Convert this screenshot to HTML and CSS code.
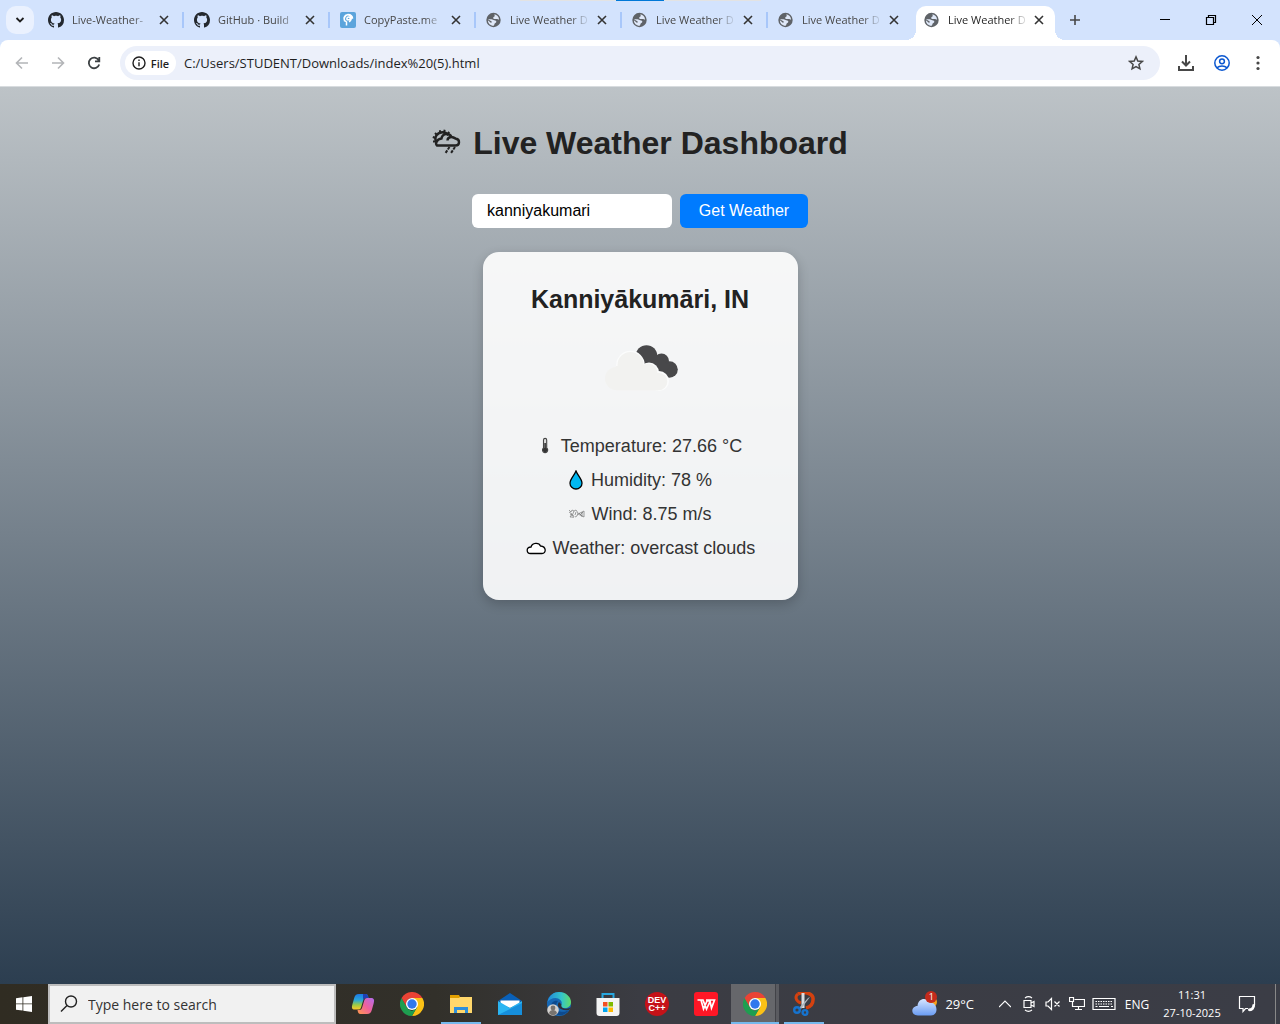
FILE: index.html
```html
<!DOCTYPE html>
<html lang="en">
<head>
<meta charset="utf-8">
<meta name="viewport" content="width=device-width, initial-scale=1">
<title>Live Weather Dashboard</title>
<link rel="stylesheet" href="styles.css">
</head>
<body>
<svg class="defs" aria-hidden="true">
  <symbol id="close" viewBox="0 0 12 12"><path d="M2 2l8 8M10 2l-8 8" stroke="currentColor" stroke-width="1.600"/></symbol>
  <symbol id="github" viewBox="0 0 16 16"><path fill="#24292f" d="M8 0C3.58 0 0 3.58 0 8c0 3.54 2.29 6.53 5.47 7.59.4.07.55-.17.55-.38 0-.19-.01-.82-.01-1.49-2.01.37-2.53-.49-2.69-.94-.09-.23-.48-.94-.82-1.13-.28-.15-.68-.52-.01-.53.63-.01 1.08.58 1.23.82.72 1.21 1.87.87 2.33.66.07-.52.28-.87.51-1.07-1.78-.2-3.64-.89-3.64-3.95 0-.87.31-1.59.82-2.15-.08-.2-.36-1.02.08-2.12 0 0 .67-.21 2.2.82.64-.18 1.32-.27 2-.27s1.36.09 2 .27c1.53-1.04 2.2-.82 2.2-.82.44 1.1.16 1.92.08 2.12.51.56.82 1.27.82 2.15 0 3.07-1.87 3.75-3.65 3.95.29.25.54.73.54 1.48 0 1.07-.01 1.93-.01 2.2 0 .21.15.46.55.38A8.01 8.01 0 0 0 16 8c0-4.42-3.58-8-8-8z"/></symbol>
  <symbol id="globe" viewBox="0 0 16 16"><circle cx="7.500" cy="8" r="7.200" fill="#5f6368"/><path fill="#dfe8f8" d="M8.500 2.200c2.500.5 4.300 2.600 4.600 5.200-1 .3-1.400-.5-2.300-.5H8.300c-1 0-1.300-.7-1-1.400C7.600 4.800 8.500 4.700 8.700 4c.200-.6-.4-1.100-.2-1.800zM1.900 7.300h3.600c1.200 0 1.700.9 2.700.9 1.300 0 2.300.7 2.100 1.900-.2 1-1.500 1-1.800 1.800-.3.700-.300 1.500-1 1.900C4.300 13.800 1.800 11.300 1.900 8.300l2.600 2.200c.5.400 1 .2 1.200-.2.300-.6-.2-1.200-.8-1.400z"/></symbol>
  <symbol id="chrome" viewBox="0 0 24 24"><path d="M12 6h10.400A12 12 0 0 1 12 24L17.200 15z" fill="#fbc116"/><path d="M1.600 6L6.800 15l1 2 4.200 2 5.200-4L12 24A12 12 0 0 1 1.600 6z" fill="#1e9e50"/><path d="M1.600 6A12 12 0 0 1 22.400 6H12a6 6 0 0 0-5.500 3.500L6.800 15z" fill="#ea4335"/><circle cx="12" cy="12" r="6" fill="#fff"/><circle cx="12" cy="12" r="4.700" fill="#3178ed"/></symbol>
</svg>

<header class="browser">
  <nav class="tabstrip" aria-label="Tabs">
    <button class="tab-search" aria-label="Search tabs"><svg width="12" height="12" viewBox="0 0 12 12" fill="none" stroke="#1f1f1f" stroke-width="1.800"><path d="M2.500 4L6 7.500 9.500 4"/></svg></button>
    <div class="tab"><svg class="fav"><use href="#github"/></svg><a class="tab-title" href="#">Live-Weather-</a><button class="tab-close" aria-label="Close tab"><svg><use href="#close"/></svg></button></div>
    <div class="tab"><svg class="fav"><use href="#github"/></svg><a class="tab-title" href="#">GitHub · Build</a><button class="tab-close" aria-label="Close tab"><svg><use href="#close"/></svg></button></div>
    <div class="tab"><svg class="fav" viewBox="0 0 16 16"><rect width="16" height="16" rx="2" fill="#5ba4dc"/><path d="M6.500 13.500V9.500M6.500 9.800a3.600 3.600 0 1 1 2.500-.1M4.600 9.300A5 5 0 0 1 8 2.500c3 0 4.700 2 4.500 4.200M6.800 7.800c0-2 .7-2.700 1.900-2.700 2 0 1.900 2.600 0 2.600H6.800" fill="none" stroke="#fff" stroke-width="1.500"/></svg><a class="tab-title" href="#">CopyPaste.me</a><button class="tab-close" aria-label="Close tab"><svg><use href="#close"/></svg></button></div>
    <div class="tab"><svg class="fav"><use href="#globe"/></svg><a class="tab-title" href="#">Live Weather D</a><button class="tab-close" aria-label="Close tab"><svg><use href="#close"/></svg></button></div>
    <div class="tab"><svg class="fav"><use href="#globe"/></svg><a class="tab-title" href="#">Live Weather D</a><button class="tab-close" aria-label="Close tab"><svg><use href="#close"/></svg></button></div>
    <div class="tab last"><svg class="fav"><use href="#globe"/></svg><a class="tab-title" href="#">Live Weather D</a><button class="tab-close" aria-label="Close tab"><svg><use href="#close"/></svg></button></div>
    <div class="tab active"><svg class="fav"><use href="#globe"/></svg><a class="tab-title" href="#" aria-current="page">Live Weather D</a><button class="tab-close" aria-label="Close tab"><svg><use href="#close"/></svg></button></div>
    <button class="new-tab" aria-label="New tab"><svg width="12" height="12" viewBox="0 0 12 12" stroke="#474747" stroke-width="1.600"><path d="M6 1v10M1 6h10"/></svg></button>
    <div class="window-controls">
      <button aria-label="Minimize"><svg width="12" height="12" viewBox="0 0 12 12" stroke="#000"><path d="M1 5.500h10"/></svg></button>
      <button aria-label="Restore"><svg width="12" height="12" viewBox="0 0 12 12" stroke="#000" fill="none" stroke-width="1.200"><path d="M1.500 3.500h7v7h-7zM3.500 3.500v-2h7v7h-2"/></svg></button>
      <button aria-label="Close"><svg width="12" height="12" viewBox="0 0 12 12" stroke="#000"><path d="M1 1l10 10M11 1L1 11"/></svg></button>
    </div>
    <div class="progress"><span></span></div>
  </nav>
  <div class="toolbar">
    <button aria-label="Back"><svg width="16" height="16" viewBox="0 0 16 16" fill="none" stroke="#b3b5b8" stroke-width="1.600"><path d="M14 8H3M8 2.500L2.500 8 8 13.500"/></svg></button>
    <button aria-label="Forward"><svg width="16" height="16" viewBox="0 0 16 16" fill="none" stroke="#b3b5b8" stroke-width="1.600"><path d="M2 8h11M8 2.500L13.500 8 8 13.500"/></svg></button>
    <button aria-label="Reload"><svg width="16" height="16" viewBox="0 0 16 16" fill="none" stroke="#3c4043" stroke-width="1.800"><path d="M12.700 5.200A5.300 5.300 0 1 0 13.200 9.500M13.300 2v4.300H9"/></svg></button>
    <div class="omnibox">
      <button class="chip"><svg width="14" height="14" viewBox="0 0 14 14" fill="none" stroke="#1f1f1f" stroke-width="1.400"><circle cx="7" cy="7" r="6"/><path d="M7 6.200v4M7 3.600v1.400"/></svg>File</button>
      <input type="text" aria-label="Address" value="C:/Users/STUDENT/Downloads/index%20(5).html">
      <button class="star" aria-label="Bookmark"><svg width="16" height="16" viewBox="0 0 16 16" fill="none" stroke="#474747" stroke-width="1.500"><path d="M8 1.900l1.800 4.100 4.500.4-3.400 3 1 4.400L8 11.500l-3.900 2.300 1-4.400-3.400-3 4.500-.4z"/></svg></button>
    </div>
    <button class="download" aria-label="Downloads"><svg width="16" height="16" viewBox="0 0 16 16" fill="none" stroke="#474747" stroke-width="2"><path d="M8 0v10M4 6.500l4 4 4-4M1 11v4h14v-4"/></svg></button>
    <button aria-label="Profile"><svg width="16" height="16" viewBox="0 0 16 16" fill="none" stroke="#0b57d0" stroke-width="1.500"><circle cx="8" cy="8" r="7.200"/><circle cx="8" cy="6.300" r="2.400"/><path d="M2.800 12.900c2.800-2.500 7.600-2.500 10.400 0"/></svg></button>
    <button aria-label="Menu"><svg width="16" height="16" viewBox="0 0 16 16" fill="#474747"><circle cx="8" cy="2.500" r="1.600"/><circle cx="8" cy="8" r="1.600"/><circle cx="8" cy="13.500" r="1.600"/></svg></button>
  </div>
</header>

<main class="dashboard">
  <h1><svg width="29" height="28" viewBox="0 0 29 28" fill="none" stroke="#222" stroke-width="2.400"><path d="M5 16.500h18.500c4.600 0 4.600-6 .5-6.700C22.500 9 22 8.500 19.500 8 17.500 3.500 10.500 4 9.500 9.500 4.500 10 3 15 5 16.500z"/><path d="M19 8c-2 .2-3.500 1.500-3.500 3.500"/><path d="M4.500 13.500C1.500 8 5.500 3.200 10.500 3.200c2.500 0 4.500 1.200 6 3"/><path d="M4 12.500H1M3.500 9L.8 8M5 6L3 4M8 4V1.200M12 3.500L12.700 .8M15.500 5l1.800-2" stroke-width="2"/><path d="M17.500 18l-4 6M23 18l-4 6" stroke-width="2" stroke-dasharray="3 1"/></svg>Live Weather Dashboard</h1>
  <form class="search">
    <input type="text" aria-label="City" value="kanniyakumari">
    <button type="button">Get Weather</button>
  </form>
  <section class="card">
    <h2>Kanniyākumāri, IN</h2>
    <svg class="condition" viewBox="0 0 105 105" role="img" aria-label="Overcast clouds"><g fill="#48484a"><circle cx="58.500" cy="42" r="10.800"/><circle cx="73.500" cy="47" r="7.500"/><circle cx="81.500" cy="55.500" r="8.300"/><path d="M52 48l16-8 14 12-6 11z"/></g><g fill="#fbfcfc"><circle cx="42.500" cy="51" r="14.300"/><circle cx="61" cy="58.500" r="10"/><circle cx="71" cy="67" r="10"/></g><g fill="#f2f2f0"><circle cx="42.500" cy="51" r="13"/><circle cx="60" cy="59" r="9.500"/><circle cx="70.500" cy="67.500" r="8.800"/><circle cx="28.500" cy="64.500" r="11.500"/><path d="M28 52h25l17 15v9.300H28z"/></g></svg>
    <ul>
      <li><svg width="17" height="20" viewBox="0 0 17 20"><path d="M5.500 4a1.600 1.600 0 0 1 3.200 0v8a2.600 2.600 0 1 1-3.200 0z" fill="#ddd" stroke="#444" stroke-width="1.100"/><path d="M7.100 7v7" stroke="#333" stroke-width="1.600"/><circle cx="7.100" cy="14" r="2.300" fill="#333"/></svg>Temperature: 27.66 °C</li>
      <li><svg width="17" height="20" viewBox="0 0 17 20"><path d="M8 1c2 5 6 8 6 12.200a6 5.800 0 0 1-12 0C2 9 6 6 8 1z" fill="#00b7f1" stroke="#000" stroke-width="1.300"/></svg>Humidity: 78 %</li>
      <li><svg width="17" height="20" viewBox="0 0 17 20" fill="none" stroke="#777" stroke-width=".7"><path d="M1 6l2 2 1-2 2 1 2-1 2 3-1 3-2 1M1 8l3 2-2 3h3M2 10l4 2-1 2M6 7l-2 5M8 8l-1 3M10 10l6-3v6l-6-3M11 9l3 3M12 11l3-3M14 8v5"/></svg>Wind: 8.75 m/s</li>
      <li><svg width="22" height="20" viewBox="0 0 22 20"><path d="M5.500 15.500C1.500 15.500.5 9 6 9c1-4.500 8-5 9.500-1 6 .5 6 7.500 1.500 7.500z" fill="#fff" stroke="#000" stroke-width="1.300"/></svg>Weather: overcast clouds</li>
    </ul>
  </section>
</main>

<footer class="taskbar">
  <button class="start" aria-label="Start"><svg width="16" height="16" viewBox="0 0 16 16" fill="#fff"><path d="M0 2.200l6.500-.9v6.200H0zM7.300 1.200L16 0v7.500H7.300zM0 8.300h6.500v6.300L0 13.700zM7.300 8.300H16V16l-8.700-1.200z"/></svg></button>
  <label class="task-search"><svg width="18" height="18" viewBox="0 0 18 18" fill="none" stroke="#222" stroke-width="1.400"><circle cx="11" cy="6.500" r="5.500"/><path d="M7 10.500L1 16.500"/></svg><input type="text" placeholder="Type here to search" aria-label="Type here to search"></label>
  <nav class="apps" aria-label="Apps">
    <button aria-label="Copilot"><svg viewBox="0 0 24 24"><defs><linearGradient id="ca" x1="0" y1="0" x2="0" y2="1"><stop offset="0" stop-color="#1d79e8"/><stop offset=".4" stop-color="#2aa8d8"/><stop offset=".7" stop-color="#9bcb45"/><stop offset="1" stop-color="#ffc928"/></linearGradient><linearGradient id="cb" x1="1" y1="0" x2="0" y2="1"><stop offset="0" stop-color="#b06cf0"/><stop offset=".5" stop-color="#f0619b"/><stop offset="1" stop-color="#ff9b4a"/></linearGradient></defs><path d="M14.500 2c2 0 2.500 1.300 3 4h-3c-1.500 0-2 1-2.500 3l-1.800 6c-.6 2-1.200 2.500-3 2.500H4c-3.500 0-3.500-2-2.500-5.500l1.700-6C4 3.500 5 2 8 2z" fill="url(#ca)"/><path d="M9.500 22c-2 0-2.500-1.300-3-4h2c1.500 0 2.300-1 2.800-3l1.800-6c.6-2 1.200-3 3-3H20c3.500 0 3.500 2.500 2.500 6l-1.700 6c-.8 2.500-1.800 4-4.800 4z" fill="url(#cb)"/><path d="M12 2h2.500c2 0 2.500 1.300 3 4h-3c-1.500 0-2 1-2.500 2z" fill="#2040b5"/></svg></button>
    <button aria-label="Chrome"><svg><use href="#chrome"/></svg></button>
    <button class="open" aria-label="File Explorer"><svg viewBox="0 0 24 24"><path d="M1 3h9l1 2v4H1z" fill="#e2a000"/><path d="M1 6h9l1-1h12v16H1z" fill="#ffd76b"/><path d="M5 21v-6h14v6h-3v-3H8v3z" fill="#2d8fdc"/></svg></button>
    <button aria-label="Mail"><svg viewBox="0 0 24 24"><path d="M0 9l12-8 12 8-12 6z" fill="#0960b8"/><path d="M2.500 8.500h19v3L12 16l-9.500-4z" fill="#fff"/><path d="M0 9l12 7 12-7v14H0z" fill="#2bb5f2"/><path d="M0 23l24-12v12z" fill="#168fdc"/></svg></button>
    <button aria-label="Edge"><svg viewBox="0 0 24 24"><defs><linearGradient id="ed"><stop offset="0" stop-color="#2189dc"/><stop offset=".6" stop-color="#34c5c9"/><stop offset="1" stop-color="#62dc67"/></linearGradient></defs><circle cx="12" cy="12" r="12" fill="#1768b5"/><path d="M.5 10C2 3 7 0 12 0c7 0 12 5 12 10 0 4-3 6-6 6-4 0-5-2-3.500-3.500C16 9 12 6 8.500 6 5 6 2 8 .5 10z" fill="url(#ed)"/><path d="M9 14c0 5 6 8 13 4-5 8-16 6-18-1-1-5 2-9 7-8-1 1-2 3-2 5z" fill="#0d4a8e"/><path d="M12 10c-3 4 0 9 10 8l2-3c-3 3-11 2-9.500-2.500z" fill="#303138"/><circle cx="6" cy="18" r="5.800" fill="#d4d2d0"/><circle cx="6" cy="16" r="2.400" fill="#77736f"/><path d="M2 21c1-4 7-4 8 0-2 3-6 3-8 0z" fill="#77736f"/></svg></button>
    <button aria-label="Microsoft Store"><svg viewBox="0 0 24 24"><path d="M6.500 7V2h11v5" fill="none" stroke="#28a8e0" stroke-width="2"/><path d="M.5 6h23v15a3 3 0 0 1-3 3h-17a3 3 0 0 1-3-3z" fill="#f3f3f3"/><path fill="#f25022" d="M7 10h4.500v4.500H7z"/><path fill="#7fba00" d="M12.500 10H17v4.500h-4.500z"/><path fill="#00a4ef" d="M7 15.500h4.500V20H7z"/><path fill="#ffb900" d="M12.500 15.500H17V20h-4.500z"/></svg></button>
    <button class="dev" aria-label="Dev-C++"><span>DEV<br>C++</span></button>
    <button aria-label="WPS Office"><svg viewBox="0 0 24 24"><rect width="24" height="24" rx="3" fill="#ff1726"/><path d="M3.500 8H9l3.500 9L16 9.500M7 8l2.500 9L13 9h3l1.500 7L20.500 8H12" fill="none" stroke="#fff" stroke-width="1.700"/></svg></button>
    <button class="open current" aria-label="Chrome window"><svg><use href="#chrome"/></svg></button>
    <button class="open" aria-label="Snipping Tool"><svg viewBox="0 0 24 24"><path d="M6 2C12-1 22 1 21 8c0 4-3 7-7 8" fill="none" stroke="#d4410f" stroke-width="3.500"/><path d="M6 2c-3 2-3 7 3 9" fill="none" stroke="#d4410f" stroke-width="3"/><path d="M9.500 1h3v15h-3z" fill="#d9dee3"/><path d="M18 5l-9 12-2-1L16 6z" fill="#aeb5bc"/><circle cx="5" cy="18" r="2.800" fill="none" stroke="#1673ce" stroke-width="2.400"/><circle cx="13" cy="20.500" r="2.400" fill="none" stroke="#1673ce" stroke-width="2.400"/></svg></button>
  </nav>
  <div class="tray">
    <button class="weather"><svg width="28" height="26" viewBox="0 0 28 26"><defs><linearGradient id="cl" x1="0" y1="0" x2="0" y2="1"><stop offset="0" stop-color="#d7e6ff"/><stop offset="1" stop-color="#6a9cf3"/></linearGradient></defs><circle cx="19" cy="11" r="6" fill="#f6a21a"/><path d="M6 24.500c-8 0-7-9.500-.5-9.500C6 7 15 5.500 17.500 12c8-2 10 12.500 1.500 12.500z" fill="url(#cl)"/></svg><span class="badge">1</span><span>29°C</span></button>
    <button aria-label="Show hidden icons"><svg width="12" height="16" viewBox="0 0 12 16"><path d="M0 11l6-6 6 6"/></svg></button>
    <button aria-label="Meet Now"><svg width="12" height="16" viewBox="0 0 12 16"><path d="M1 4.500h7v7H1zM8 7l3-1.500v5L8 9M2 2c2-1.500 5-1.500 7 0M2 14c2 1.500 5 1.500 7 0"/></svg></button>
    <button aria-label="Volume muted"><svg width="16" height="16" viewBox="0 0 16 16"><path d="M1 6h2l3.500-3.500v11L3 10H1zM9.500 5.500l5 5M14.500 5.500l-5 5"/></svg></button>
    <button aria-label="Network"><svg width="16" height="16" viewBox="0 0 16 16"><path d="M5.500 3.500h10v7h-12V6M9.500 10.500v3M6 13.500h7M.5 1.500h4v4h-4z"/></svg></button>
    <button aria-label="Touch keyboard"><svg width="24" height="16" viewBox="0 0 24 16"><path d="M1 2.500h22v11H1z"/><path d="M3.500 5.500h17M3.500 8h17" stroke-dasharray="1.500 1"/><path d="M3.500 10.500h2M7 10.500h10M19 10.500h2"/></svg></button>
    <button class="lang">ENG</button>
    <button class="clock"><time datetime="2025-10-27T11:31">11:31<br>27-10-2025</time></button>
    <button class="notify" aria-label="Notifications"><svg width="18" height="18" viewBox="0 0 18 18"><path d="M10 13.500H7.500l-2.500 3v-3H1.500v-12h15v8"/><path d="M16.500 9.500c0 4-2 6.500-5.500 6-.5-.5-.5-1 0-1.500 2.500 0 4-1.500 4-4z" fill="#fff"/></svg></button>
    <span class="peek"></span>
  </div>
</footer>
</body>
</html>
```

FILE: styles.css
```css
* { box-sizing: border-box; }

body {
  margin: 0;
  min-height: 100vh;
  display: flex;
  flex-direction: column;
  font-family: "Liberation Sans", Arial, sans-serif;
}

button {
  display: flex;
  align-items: center;
  justify-content: center;
  border: 0;
  padding: 0;
  background: none;
  font: inherit;
  color: inherit;
  cursor: pointer;
}

input { border: 0; padding: 0; background: none; font: inherit; color: inherit; outline: 0; }
svg { flex: none; }
.defs { display: none; }

/* Browser frame */
.browser { background: #d3e3fd; font-family: "Open Sans", "Noto Sans", sans-serif; }
.tabstrip { display: flex; height: 40px; position: relative; }
.tab-search { width: 28px; height: 28px; margin: 6px; border-radius: 10px; background: #eaf1fe; }

.tab {
  position: relative;
  display: flex;
  align-items: center;
  flex: 0 1 146px;
  min-width: 0;
  padding: 0 14px 0 8px;
}
.tab:not(.active)::after {
  content: "";
  position: absolute;
  right: 2px;
  width: 2px;
  height: 16px;
  background: #a8c7fa;
}
.tab.last::after { display: none; }
.fav { width: 16px; height: 16px; }
.tab-title {
  flex: 1;
  min-width: 0;
  margin: 0 4px 0 8px;
  overflow: hidden;
  white-space: nowrap;
  font-size: 11px;
  line-height: 20px;
  color: #474747;
  text-decoration: none;
  mask-image: linear-gradient(90deg, #000 60px, transparent 80px);
}
.tab-close { width: 16px; height: 16px; color: #333; }
.tab-close svg { width: 12px; height: 12px; }
.tab.active {
  flex-basis: 139px;
  height: 34px;
  margin-top: 6px;
  padding: 0 8px 6px;
  border-radius: 10px 10px 0 0;
  background: #fff;
}
.active .tab-title { color: #1f1f1f; }
.active::before, .active::after {
  content: "";
  position: absolute;
  bottom: 0;
  width: 10px;
  height: 10px;
}
.active::before { left: -10px; background: radial-gradient(circle at 0 0, transparent 10px, #fff 10px); }
.active::after { right: -10px; background: radial-gradient(circle at 100% 0, transparent 10px, #fff 10px); }

.new-tab { width: 40px; }
.window-controls { display: flex; margin-left: auto; }
.window-controls button { width: 46px; }
.progress {
  position: absolute;
  top: 0;
  left: 520px;
  width: 241px;
  height: 1px;
  padding-left: 96px;
  background: #e3e3e3;
}
.progress span { display: block; width: 48px; height: 1px; background: #0078d7; }

.toolbar {
  display: flex;
  align-items: center;
  height: 47px;
  padding: 0 4px;
  border-radius: 8px 8px 0 0;
  border-bottom: 1px solid #d8dcdf;
  background: #fff;
}
.toolbar > button { width: 36px; height: 36px; }
.omnibox {
  display: flex;
  align-items: center;
  flex: 1;
  height: 34px;
  margin: 0 8px;
  padding: 0 16px 0 5px;
  border-radius: 17px;
  background: #ecf0fa;
  color: #1f1f1f;
}
.chip {
  gap: 5px;
  width: 51px;
  height: 24px;
  border-radius: 12px;
  background: #fff;
  font-size: 11px;
  font-weight: 600;
}
.omnibox input { flex: 1; min-width: 0; margin-left: 8px; font-size: 13px; }

/* Dashboard */
.dashboard {
  flex: 1;
  display: flex;
  flex-direction: column;
  align-items: center;
  padding: 38px 16px;
  background: linear-gradient(#bdc3c7, #2c3e50);
  color: #222;
}
h1 { display: flex; align-items: center; gap: 12px; margin: 0 0 33px; font-size: 32px; line-height: 36px; }
.search { display: flex; gap: 8px; margin-bottom: 24px; font-size: 16px; }
.search input { width: 200px; height: 34px; padding: 0 15px; border-radius: 6px; background: #fff; color: #000; }
.search button { width: 128px; height: 34px; border-radius: 6px; background: #007bff; color: #fff; }
.card {
  display: flex;
  flex-direction: column;
  align-items: center;
  width: 315px;
  max-width: 100%;
  padding: 32px 20px 35px;
  border-radius: 16px;
  background: rgba(255, 255, 255, 0.9);
  box-shadow: 0 4px 12px rgba(0, 0, 0, 0.2);
}
h2 { margin: 0; font-size: 25px; line-height: 30px; }
.condition { width: 105px; height: 105px; margin-bottom: 10px; }
ul { margin: 0; padding: 0; list-style: none; font-size: 18px; line-height: 34px; }
li { display: flex; align-items: center; justify-content: center; gap: 6px; color: #333; }

/* Taskbar */
.taskbar {
  display: flex;
  height: 40px;
  background: linear-gradient(90deg, #302c22, #32302a 34%, #3b3c43 50%, #3b3d46);
  color: #fff;
  font-family: "Open Sans", "Noto Sans", sans-serif;
  font-size: 12px;
}
.start { width: 48px; }
.task-search {
  display: flex;
  align-items: center;
  gap: 10px;
  flex: 0 1 288px;
  min-width: 0;
  padding: 0 10px;
  border: 2px solid #bdbdbd;
  background: #f1f1f1;
}
.task-search input { flex: 1; min-width: 0; font-size: 14px; color: #333; }
.task-search input::placeholder { color: #333; opacity: 1; }
.apps { display: flex; gap: 1px; margin-left: 3px; }
.apps button { width: 48px; }
.apps svg { width: 24px; height: 24px; }
.apps .open { background: linear-gradient(#76b9ed, #76b9ed) center bottom / 40px 2px no-repeat; }
.apps .current { background: linear-gradient(#76b9ed, #76b9ed) center bottom / 48px 2px no-repeat, linear-gradient(90deg, #66676b 44px, #424348 44px, #424348 45px, #5a5b60 45px); }
.dev span {
  display: grid;
  place-content: center;
  width: 24px;
  height: 24px;
  border-radius: 50%;
  background: #c51218;
  font: bold 9px/8px "Liberation Sans", sans-serif;
}
.tray { display: flex; align-items: center; margin-left: auto; }
.tray button { height: 40px; width: 24px; }
.tray svg { fill: none; stroke: #fff; stroke-width: 1.2; }
.tray .weather { position: relative; width: auto; gap: 5px; margin-right: 19px; font-size: 13px; }
.weather svg { stroke: none; }
.badge {
  position: absolute;
  top: 7px;
  left: 13px;
  width: 12px;
  height: 12px;
  border-radius: 50%;
  background: #c42b1c;
  font-size: 9px;
  line-height: 12px;
}
.tray button[aria-label="Touch keyboard"] { width: 30px; }
.tray .lang { width: 36px; }
.tray .clock { width: 74px; font-size: 11px; line-height: 18px; }
.tray .notify { width: 36px; margin-right: 10px; }
.peek { width: 5px; height: 40px; border-left: 1px solid #888; }
```
